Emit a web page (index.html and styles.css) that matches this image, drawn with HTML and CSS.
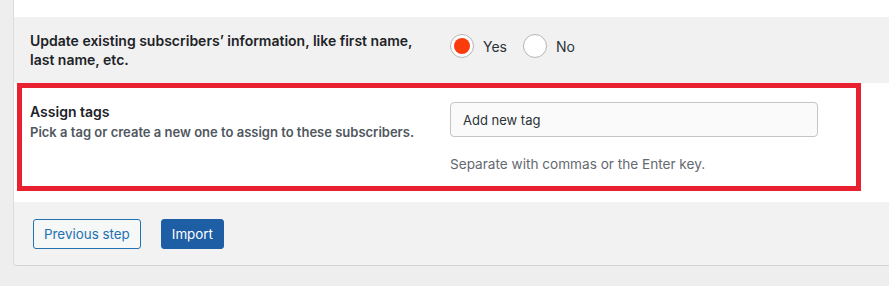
FILE: index.html
```html
<!DOCTYPE html>
<html lang="en">

<head>
    <meta charset="UTF-8">
    <meta name="viewport" content="width=device-width, initial-scale=1.0">
    <title>Import subscribers</title>

    <link rel="stylesheet" href="styles.css">

</head>

<body>

    <div class="card">

        <div class="row row-top"></div>

        <div class="row row-grey">
            <div class="label">
                <p class="title">Update existing subscribers&rsquo; information, like first name, last name, etc.</p>
            </div>
            <div class="field radios">
                <label class="radio"><span class="dot checked"></span>Yes</label>
                <label class="radio"><span class="dot"></span>No</label>
            </div>
        </div>

        <div class="row row-white">
            <div class="highlight">
                <div class="label">
                    <p class="title">Assign tags</p>
                    <p class="desc">Pick a tag or create a new one to assign to these subscribers.</p>
                </div>
                <div class="field">
                    <input class="tag-input" type="text" placeholder="Add new tag" />
                    <p class="help">Separate with commas or the Enter key.</p>
                </div>
            </div>
        </div>

        <div class="footer">
            <button class="btn btn-secondary">Previous step</button>
            <button class="btn btn-primary">Import</button>
        </div>

    </div>

</body>

</html>
```

FILE: styles.css
```css
body {
    margin: 0;
    font-family: Inter, 'Noto Sans', sans-serif;
    font-size: 13px;
    color: #1d2327;
    background-color: #eeeeee;
    height: 286px;
    overflow: hidden;
}

p {
    margin: 0;
}

.card {
    margin-left: 13px;
    border-left: 1px solid #dcdcde;
    border-bottom: 1px solid #d4d4d4;
    border-bottom-left-radius: 4px;
    background-color: #f2f2f2;
}

.row {
    display: flex;
}

.row-top {
    height: 17px;
    background-color: #ffffff;
}

.row-grey {
    height: 66px;
    box-sizing: border-box;
    padding: 14px 0 0 16px;
    background-color: #f1f1f1;
}

.row-white {
    height: 119px;
    box-sizing: border-box;
    padding: 0 0 0 3px;
    background-color: #ffffff;
}

.label {
    width: 420px;
    flex-shrink: 0;
}

.title {
    font-weight: 600;
    font-size: 14px;
    line-height: 19px;
    color: #1d2327;
    width: 390px;
}

.desc {
    margin-top: 2px;
    font-weight: 600;
    font-size: 13px;
    line-height: 18px;
    color: #50575e;
}

.radios {
    display: flex;
    align-items: center;
    gap: 16px;
    padding-top: 3px;
    height: 24px;
}

.radio {
    display: flex;
    align-items: center;
    gap: 9px;
    font-size: 14px;
    color: #2c3338;
}

.dot {
    width: 22px;
    height: 22px;
    border: 1px solid #b4b4b4;
    border-radius: 50%;
    background-color: #ffffff;
    position: relative;
}

.dot.checked::after {
    content: "";
    position: absolute;
    left: 3px;
    top: 3px;
    width: 16px;
    height: 16px;
    border-radius: 50%;
    background-color: #fa3b0b;
}

.highlight {
    display: flex;
    width: 844px;
    height: 108px;
    box-sizing: border-box;
    border: 5px solid #e8202f;
    padding: 16px 0 0 8px;
}

.highlight .title {
    margin-top: -2px;
}

.field {
    flex: 1;
}

.tag-input {
    display: block;
    width: 368px;
    height: 35px;
    box-sizing: border-box;
    margin-top: -2px;
    padding: 0 12px;
    border: 1px solid #c3c4c7;
    border-radius: 4px;
    background-color: #fafafa;
    font-family: inherit;
    font-size: 13px;
}

.tag-input::placeholder {
    color: #2c3338;
}

.help {
    margin-top: 19px;
    font-size: 13.6px;
    color: #646970;
}

.footer {
    height: 63px;
    box-sizing: border-box;
    padding: 17px 0 0 19px;
    display: flex;
    gap: 20px;
}

.btn {
    height: 30px;
    box-sizing: border-box;
    padding: 0 10px;
    border-radius: 3px;
    font-family: inherit;
    font-size: 13.4px;
    cursor: pointer;
}

.btn-secondary {
    border: 1px solid #2271b1;
    background-color: #f6f7f7;
    color: #2271b1;
}

.btn-primary {
    border: 1px solid #1e5ea5;
    background-color: #1e5ea5;
    color: #ffffff;
}
```
